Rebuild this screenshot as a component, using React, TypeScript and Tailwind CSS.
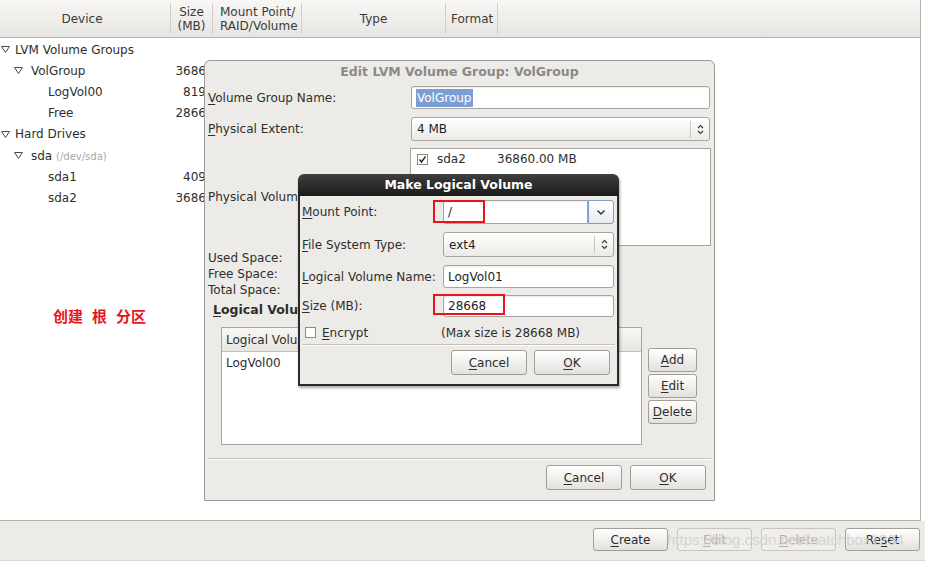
import React from "react";

const U = ({ c }: { c: string }) => (
  <span className="underline underline-offset-[2px] decoration-1">{c}</span>
);

const Tri = () => (
  <svg width="9" height="7" viewBox="0 0 9 7" className="shrink-0">
    <path d="M0.5 0.5 H8.5 L4.5 6.5 Z" fill="#fff" stroke="#4a4a4a" strokeWidth="1" />
  </svg>
);

const Spinner = () => (
  <svg width="7" height="11" viewBox="0 0 7 11">
    <path d="M1 4 L3.5 1.5 L6 4" fill="none" stroke="#3a3a3a" strokeWidth="1.1" />
    <path d="M1 7 L3.5 9.5 L6 7" fill="none" stroke="#3a3a3a" strokeWidth="1.1" />
  </svg>
);

const Check = () => (
  <div className="w-[11px] h-[11px] border border-[#8d8983] bg-white flex items-center justify-center shrink-0">
    <svg width="9" height="9" viewBox="0 0 9 9">
      <path d="M1.5 4.5 L3.5 7 L7.5 1.5" fill="none" stroke="#2a2a2a" strokeWidth="1.4" />
    </svg>
  </div>
);

const btnBase =
  "flex items-center justify-center rounded-[3px] border border-[#a19d97] bg-linear-to-b from-[#ffffff] to-[#e3e1dd] text-[12px] text-[#2e2e2e] shadow-[inset_0_1px_0_#ffffff]";

const entry =
  "bg-white border border-[#a8a49e] rounded-[3px] shadow-[inset_0_1px_1px_rgba(0,0,0,0.08)] flex items-center px-[4px] text-[12px] text-[#1e1e1e]";

const combo =
  "border border-[#a8a49e] rounded-[3px] bg-linear-to-b from-[#ffffff] to-[#eceae7] flex items-center text-[12px] text-[#1e1e1e]";

const treeRows: { level: number; label: React.ReactNode; size?: string; exp?: boolean }[] = [
  { level: 0, label: "LVM Volume Groups", exp: true },
  { level: 1, label: "VolGroup", size: "3686", exp: true },
  { level: 2, label: "LogVol00", size: "819" },
  { level: 2, label: "Free", size: "2866" },
  { level: 0, label: "Hard Drives", exp: true },
  {
    level: 1,
    label: (
      <>
        sda <span className="text-[10px] text-[#a8a8a8]">(/dev/sda)</span>
      </>
    ),
    exp: true,
  },
  { level: 2, label: "sda1", size: "409" },
  { level: 2, label: "sda2", size: "3686" },
];

export default function App() {
  return (
    <div className="relative w-[925px] h-[561px] overflow-hidden bg-white font-['DejaVu_Sans',sans-serif] text-[12px] text-[#2e2e2e]">
      <div className="flex flex-col h-full">
        {/* tree pane */}
        <div className="flex flex-col w-[921px] h-[521px] border-r border-b border-[#b5b1ab] bg-white">
          {/* header */}
          <div className="flex h-[38px] shrink-0 bg-linear-to-b from-[#f8f7f5] to-[#e7e5e1] border-b border-[#b7b3ad] text-[12px] text-[#3a3a3a] leading-[14px]">
            <div className="w-[171px] flex items-center justify-center border-r border-[#d2cfca] my-[3px] pr-[6px]">Device</div>
            <div className="w-[42px] flex flex-col justify-center items-center border-r border-[#d2cfca] my-[3px]">
              <span>Size</span>
              <span>(MB)</span>
            </div>
            <div className="w-[89px] flex flex-col justify-center pl-[7px] border-r border-[#d2cfca] my-[3px]">
              <span>Mount Point/</span>
              <span>RAID/Volume</span>
            </div>
            <div className="w-[144px] flex items-center justify-center border-r border-[#d2cfca] my-[3px]">Type</div>
            <div className="w-[52px] flex items-center pl-[5px] border-r border-[#d2cfca] my-[3px]">Format</div>
            <div className="flex-1" />
          </div>
          {/* rows */}
          <div className="flex flex-col pt-[1px]">
            {treeRows.map((r, i) => (
              <div key={i} className={`flex items-center text-[12px] text-[#2e2e2e] ${i === 4 ? "h-[22px]" : "h-[21px]"}`}>
                <div className="w-[171px] flex items-center">
                  {r.level === 0 && (
                    <>
                      <span className="w-[1px]" />
                      <Tri />
                      <span className="ml-[5px]">{r.label}</span>
                    </>
                  )}
                  {r.level === 1 && (
                    <>
                      <span className="w-[14px]" />
                      <Tri />
                      <span className="ml-[8px]">{r.label}</span>
                    </>
                  )}
                  {r.level === 2 && <span className="ml-[48px]">{r.label}</span>}
                </div>
                <div className="w-[35px] text-right">{r.size ?? ""}</div>
              </div>
            ))}
          </div>
        </div>
        {/* bottom bar */}
        <div className="flex-1 bg-[#edebe8] flex justify-end items-start pt-[7px] pr-[5px] gap-[9px] border-b border-[#dcd9d5]">
          <div className={`${btnBase} w-[75px] h-[23px]`}>
            <U c="C" />reate
          </div>
          <div className="flex items-center justify-center rounded-[3px] border border-[#c8c5c0] bg-[#efeeeb] w-[75px] h-[23px] text-[12px] text-[#b3afa9]">
            <U c="E" />dit
          </div>
          <div className="flex items-center justify-center rounded-[3px] border border-[#c8c5c0] bg-[#efeeeb] w-[75px] h-[23px] text-[12px] text-[#b3afa9]">
            <U c="D" />elete
          </div>
          <div className={`${btnBase} w-[75px] h-[23px]`}>
            Re<U c="s" />et
          </div>
        </div>
      </div>

      {/* red annotation text */}
      <div className="absolute left-[53px] top-[305px] flex gap-[9px] font-['Noto_Sans_CJK_SC',sans-serif] font-bold text-[15px] text-[#e8141b] leading-[22px]">
        <span>创建</span>
        <span>根</span>
        <span>分区</span>
      </div>

      {/* Edit LVM Volume Group dialog */}
      <div className="absolute left-[204px] top-[60px] w-[511px] h-[441px] bg-[#edebe8] border border-[#9d9993] rounded-t-[6px] flex flex-col px-[3px]">
        <div className="h-[21px] pt-[1px] flex items-center justify-center font-bold text-[12.5px] text-[#8b8985]">
          Edit LVM Volume Group: VolGroup
        </div>
        <div className="flex items-center mt-[4px] h-[23px]">
          <div className="w-[203px]">
            <U c="V" />olume Group Name:
          </div>
          <div className={`${entry} flex-1 h-[23px] mr-[1px]`}>
            <span className="bg-[#7b9fd2] text-white px-[1px]">VolGroup</span>
          </div>
        </div>
        <div className="flex items-center mt-[8px] h-[24px]">
          <div className="w-[203px]">
            <U c="P" />hysical Extent:
          </div>
          <div className={`${combo} flex-1 h-[24px] mr-[1px]`}>
            <span className="flex-1 pl-[5px]">4 MB</span>
            <span className="w-[1px] h-[17px] bg-[#c9c6c1]" />
            <span className="w-[18px] flex justify-center">
              <Spinner />
            </span>
          </div>
        </div>
        <div className="flex items-center mt-[7px] h-[98px]">
          <div className="w-[202px]">Physical Volumes to Use:</div>
          <div className="flex-1 h-[98px] bg-white border border-[#a8a49e] flex flex-col">
            <div className="flex items-center h-[20px] pl-[6px]">
              <Check />
              <span className="ml-[9px] w-[60px]">sda2</span>
              <span>36860.00 MB</span>
            </div>
          </div>
        </div>
        <div className="flex flex-col mt-[4px] leading-[16px]">
          <span>Used Space:</span>
          <span>Free Space:</span>
          <span>Total Space:</span>
        </div>
        <div className="mt-[4px] pl-[5px] leading-[16px] font-bold text-[12.5px] text-[#2e2e2e]">
          <U c="L" />ogical Volumes
        </div>
        <div className="flex items-center mt-[9px] pl-[13px]">
          <div className="w-[421px] h-[118px] bg-white border border-[#a8a49e] flex flex-col">
            <div className="h-[24px] flex items-center pl-[4px] bg-linear-to-b from-[#f8f7f5] to-[#e7e5e1] border-b border-[#c2beb8]">
              Logical Volume Name
            </div>
            <div className="h-[21px] flex items-center pl-[4px]">LogVol00</div>
          </div>
          <div className="flex flex-col gap-[2px] ml-[6px]">
            <div className={`${btnBase} w-[49px] h-[24px]`}>
              <U c="A" />dd
            </div>
            <div className={`${btnBase} w-[49px] h-[24px]`}>
              <U c="E" />dit
            </div>
            <div className={`${btnBase} w-[49px] h-[24px]`}>
              <U c="D" />elete
            </div>
          </div>
        </div>
        <div className="mt-[13px] h-[2px] border-t border-[#c4c0ba] border-b border-b-white" />
        <div className="flex justify-end gap-[8px] mt-[5px] pr-[5px]">
          <div className={`${btnBase} w-[76px] h-[25px]`}>
            <U c="C" />ancel
          </div>
          <div className={`${btnBase} w-[76px] h-[25px]`}>
            <U c="O" />K
          </div>
        </div>
      </div>

      {/* Make Logical Volume dialog */}
      <div className="absolute left-[298px] top-[174px] w-[321px] h-[212px] flex flex-col shadow-[1px_2px_3px_rgba(0,0,0,0.35)] rounded-t-[6px]">
        <div className="h-[22px] pt-[1px] shrink-0 rounded-t-[6px] bg-linear-to-b from-[#3f3f3f] to-[#1b1b1b] flex items-center justify-center font-bold text-[12.5px] text-white">
          Make Logical Volume
        </div>
        <div className="flex-1 bg-[#edebe8] border-x-2 border-b-2 border-[#2a2a2a] flex flex-col px-[2px]">
          <div className="flex items-center mt-[4px] h-[24px]">
            <div className="w-[141px]">
              <U c="M" />ount Point:
            </div>
            <div className="flex h-[24px] w-[171px]">
              <div className={`${entry} flex-1 h-[24px] rounded-r-none`}>/</div>
              <div className="w-[26px] h-[24px] border border-[#7d9ccb] rounded-r-[3px] bg-linear-to-b from-[#ffffff] to-[#e6ebf2] flex items-center justify-center">
                <svg width="10" height="7" viewBox="0 0 10 7">
                  <path d="M1.5 1.5 L5 5 L8.5 1.5" fill="none" stroke="#2e2e2e" strokeWidth="1.4" />
                </svg>
              </div>
            </div>
          </div>
          <div className="flex items-center mt-[8px] h-[25px]">
            <div className="w-[141px]">
              <U c="F" />ile System Type:
            </div>
            <div className={`${combo} w-[171px] h-[25px]`}>
              <span className="flex-1 pl-[5px]">ext4</span>
              <span className="w-[1px] h-[17px] bg-[#c9c6c1]" />
              <span className="w-[18px] flex justify-center">
                <Spinner />
              </span>
            </div>
          </div>
          <div className="flex items-center mt-[8px] h-[23px]">
            <div className="w-[141px]">
              <U c="L" />ogical Volume Name:
            </div>
            <div className={`${entry} w-[171px] h-[23px]`}>LogVol01</div>
          </div>
          <div className="flex items-center mt-[7px] h-[22px]">
            <div className="w-[141px]">
              <U c="S" />ize (MB):
            </div>
            <div className={`${entry} w-[171px] h-[22px]`}>28668</div>
          </div>
          <div className="flex items-center mt-[9px] h-[13px]">
            <div className="w-[139px] flex items-center">
              <div className="ml-[3px] w-[11px] h-[11px] border border-[#8d8983] bg-white" />
              <span className="ml-[6px]">
                <U c="E" />ncrypt
              </span>
            </div>
            <span>(Max size is 28668 MB)</span>
          </div>
          <div className="mt-[5px] h-[2px] border-t border-[#c4c0ba] border-b border-b-white" />
          <div className="flex justify-end gap-[7px] mt-[4px] pr-[5px]">
            <div className={`${btnBase} w-[76px] h-[25px]`}>
              <U c="C" />ancel
            </div>
            <div className={`${btnBase} w-[76px] h-[25px]`}>
              <U c="O" />K
            </div>
          </div>
        </div>
      </div>

      {/* red highlight boxes */}
      <div className="absolute left-[433px] top-[200px] w-[52px] h-[23px] border-2 border-[#e8141b]" />
      <div className="absolute left-[433px] top-[294px] w-[72px] h-[21px] border-2 border-[#e8141b]" />

      {/* watermark */}
      <div className="absolute left-[667px] top-[531px] font-['Liberation_Sans',sans-serif] text-[15px] leading-[18px] text-[#d2d2d2] opacity-90 pointer-events-none">
        https://blog.csdn.net/matchbox1234
      </div>
    </div>
  );
}
